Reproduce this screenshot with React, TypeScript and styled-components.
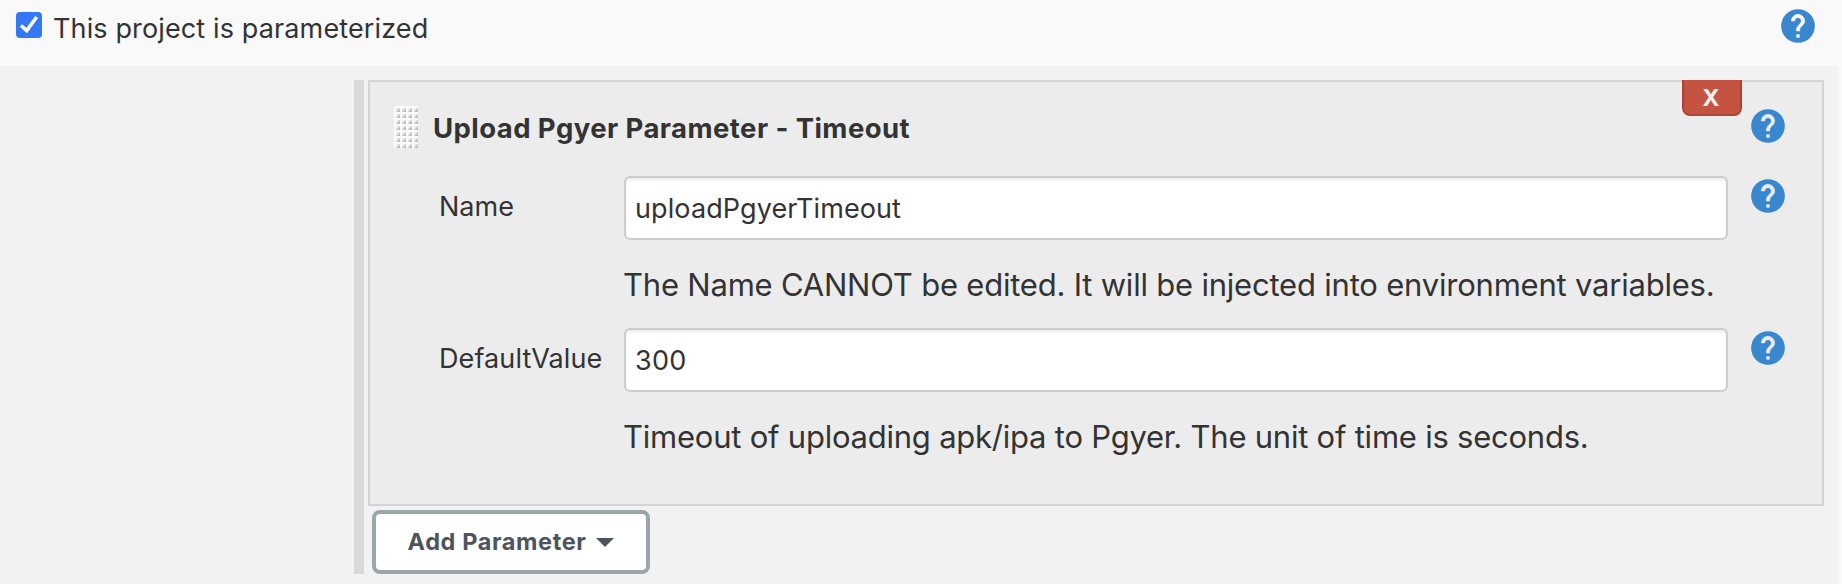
import React from "react";
import styled, { createGlobalStyle } from "styled-components";

const GlobalStyle = createGlobalStyle`
  *, *::before, *::after { box-sizing: border-box; }
  body {
    margin: 0;
    background: #f9f9f9;
    color: #333;
    font-family: Inter, "Liberation Sans", sans-serif;
    overflow: hidden;
  }
`;

const Page = styled.main`
  width: 1842px;
  height: 584px;
  display: flex;
  flex-direction: column;
`;

const OptionRow = styled.header`
  height: 66px;
  display: flex;
  align-items: flex-start;
  justify-content: space-between;
  padding: 6px 24px 0 16px;
`;

const OptionLabel = styled.label`
  display: flex;
  align-items: flex-start;
  gap: 11px;
  padding-top: 6px;
`;

const Checkbox = styled.span`
  width: 26px;
  height: 26px;
  border-radius: 4px;
  background: #3478f6;
  display: flex;
`;

const Text = styled.span<{ $size: number; $spacing?: number; $weight?: number }>`
  font-size: ${(p) => p.$size}px;
  letter-spacing: ${(p) => p.$spacing ?? 0}px;
  font-weight: ${(p) => p.$weight ?? 400};
  line-height: 34px;
  white-space: nowrap;
`;

const Section = styled.section`
  flex: 1;
  margin-right: 4px;
  padding: 14px 14px 10px 354px;
  background: #f2f2f2;
  display: flex;
  gap: 4px;
`;

const Rail = styled.div`
  flex: none;
  width: 10px;
  background: #d9d9d9;
`;

const Content = styled.div`
  flex: 1;
  min-width: 0;
  display: flex;
  flex-direction: column;
  align-items: flex-start;
  gap: 4px;
`;

const Panel = styled.article`
  position: relative;
  align-self: stretch;
  height: 426px;
  border: 2px solid #d4d4d4;
  background: #ececec;
  padding: 24px 34px 0 24px;
`;

const PanelHeader = styled.div`
  height: 70px;
  display: flex;
  align-items: flex-start;
`;

const Title = styled.h2`
  flex: 1;
  margin: 5px 0 0 15px;
  font-size: 27.5px;
  line-height: 34px;
  font-weight: 700;
  letter-spacing: 0.43px;
`;

const RemoveButton = styled.button`
  position: absolute;
  top: -2px;
  right: 80px;
  width: 60px;
  height: 36px;
  padding: 0 2px 0 0;
  border: 2px solid #ae4234;
  border-top-width: 0;
  border-radius: 0 0 8px 8px;
  background: #c45342;
  color: #f2eeee;
  font: 700 23.5px/36px Inter, sans-serif;
`;

const FieldGrid = styled.div`
  display: grid;
  grid-template-columns: 165px 1104px 40px;
  grid-template-rows: 64px 88px;
  column-gap: 20px;
  padding-left: 45px;
  justify-content: start;
`;

const FieldLabel = styled.label`
  padding-top: 14px;
`;

const Input = styled.input<{ $spacing?: number }>`
  width: 1104px;
  height: 64px;
  border: 2px solid #ccc;
  border-radius: 6px;
  padding: 0 9px;
  background: #fff;
  box-shadow: inset 0 2px 2px rgba(0, 0, 0, 0.075);
  color: #333;
  font: 400 27px/34px Inter, sans-serif;
  letter-spacing: ${(p) => p.$spacing ?? 0}px;
  outline: 0;
`;

const Description = styled.div`
  grid-column: 2 / 4;
  margin-left: -1px;
  padding-top: 28px;
`;

const AddButton = styled.button`
  width: 278px;
  height: 64px;
  margin-left: 4px;
  padding: 0;
  display: flex;
  align-items: center;
  justify-content: center;
  gap: 10px;
  border: 4px solid #9aa6ac;
  border-radius: 8px;
  background: #fff;
  color: #4d545d;
  font-family: inherit;
`;

const HelpSvg = styled.svg<{ $mark: string }>`
  width: 40px;
  height: 40px;
  flex: none;
  fill: ${(p) => p.$mark};
  stroke: ${(p) => p.$mark};
  stroke-width: 0.3;

  circle {
    fill: #3987cf;
    stroke: none;
  }
`;

const Help = ({ mark = "#ececec" }: { mark?: string }) => (
  <HelpSvg viewBox="0 0 24 24" aria-label="Help" $mark={mark}>
    <circle cx="12" cy="12" r="10.1" />
    <path d="M13 19h-2v-2h2z" stroke="none" />
    <path d="M15.07 11.25l-.9.92C13.45 12.9 13 13.5 13 15h-2v-.5c0-1.1.45-2.1 1.17-2.83l1.24-1.26c.37-.36.59-.86.59-1.41 0-1.1-.9-2-2-2s-2 .9-2 2H8c0-2.21 1.79-4 4-4s4 1.79 4 4c0 .88-.36 1.68-.93 2.25z" />
  </HelpSvg>
);

const DragHandle = () => (
  <svg width="24" height="42" viewBox="0 0 24 42">
    <defs>
      <linearGradient id="dimple" x1="0" y1="0" x2="1" y2="1">
        <stop offset="0.2" stopColor="#f4f4f3" />
        <stop offset="0.8" stopColor="#b9b8b4" />
      </linearGradient>
    </defs>
    <rect width="24" height="42" fill="#fafafa" />
    {Array.from({ length: 28 }, (_, i) => (
      <rect key={i} x={2 + (i % 4) * 6} y={2 + Math.floor(i / 4) * 6} width="4" height="4" fill="url(#dimple)" />
    ))}
  </svg>
);

type FieldProps = {
  label: string;
  value: string;
  note: string;
  noteSpacing: number;
  labelSpacing?: number;
  valueSpacing?: number;
};

const Field = (p: FieldProps) => (
  <FieldGrid>
    <FieldLabel>
      <Text $size={27} $spacing={p.labelSpacing}>{p.label}</Text>
    </FieldLabel>
    <Input defaultValue={p.value} readOnly $spacing={p.valueSpacing} />
    <Help />
    <Description>
      <Text $size={31} $spacing={p.noteSpacing}>{p.note}</Text>
    </Description>
  </FieldGrid>
);

export default function App() {
  return (
    <>
      <GlobalStyle />
      <Page>
        <OptionRow>
          <OptionLabel>
            <Checkbox>
              <svg width="26" height="26" viewBox="0 0 26 26" fill="none" stroke="#fff" strokeWidth="3.6">
                <path d="M5 13.5l5.7 5L20.7 5" />
              </svg>
            </Checkbox>
            <Text $size={27} $spacing={0.13}>This project is parameterized</Text>
          </OptionLabel>
          <Help mark="#f9f9f9" />
        </OptionRow>
        <Section>
          <Rail />
          <Content>
            <Panel>
              <PanelHeader>
                <DragHandle />
                <Title>Upload Pgyer Parameter - Timeout</Title>
                <Help />
              </PanelHeader>
              <Field
                label="Name"
                value="uploadPgyerTimeout"
                note="The Name CANNOT be edited. It will be injected into environment variables."
                valueSpacing={0.1}
                noteSpacing={-0.21}
              />
              <Field
                label="DefaultValue"
                value="300"
                note="Timeout of uploading apk/ipa to Pgyer. The unit of time is seconds."
                labelSpacing={0.1}
                valueSpacing={0.3}
                noteSpacing={-0.23}
              />
              <RemoveButton>X</RemoveButton>
            </Panel>
            <AddButton>
              <Text $size={23.5} $weight={700} $spacing={0.6}>Add Parameter</Text>
              <svg width="18" height="9" viewBox="0 0 18 9"><path d="M0 0h18L9 9z" fill="currentColor" /></svg>
            </AddButton>
          </Content>
        </Section>
      </Page>
    </>
  );
}
